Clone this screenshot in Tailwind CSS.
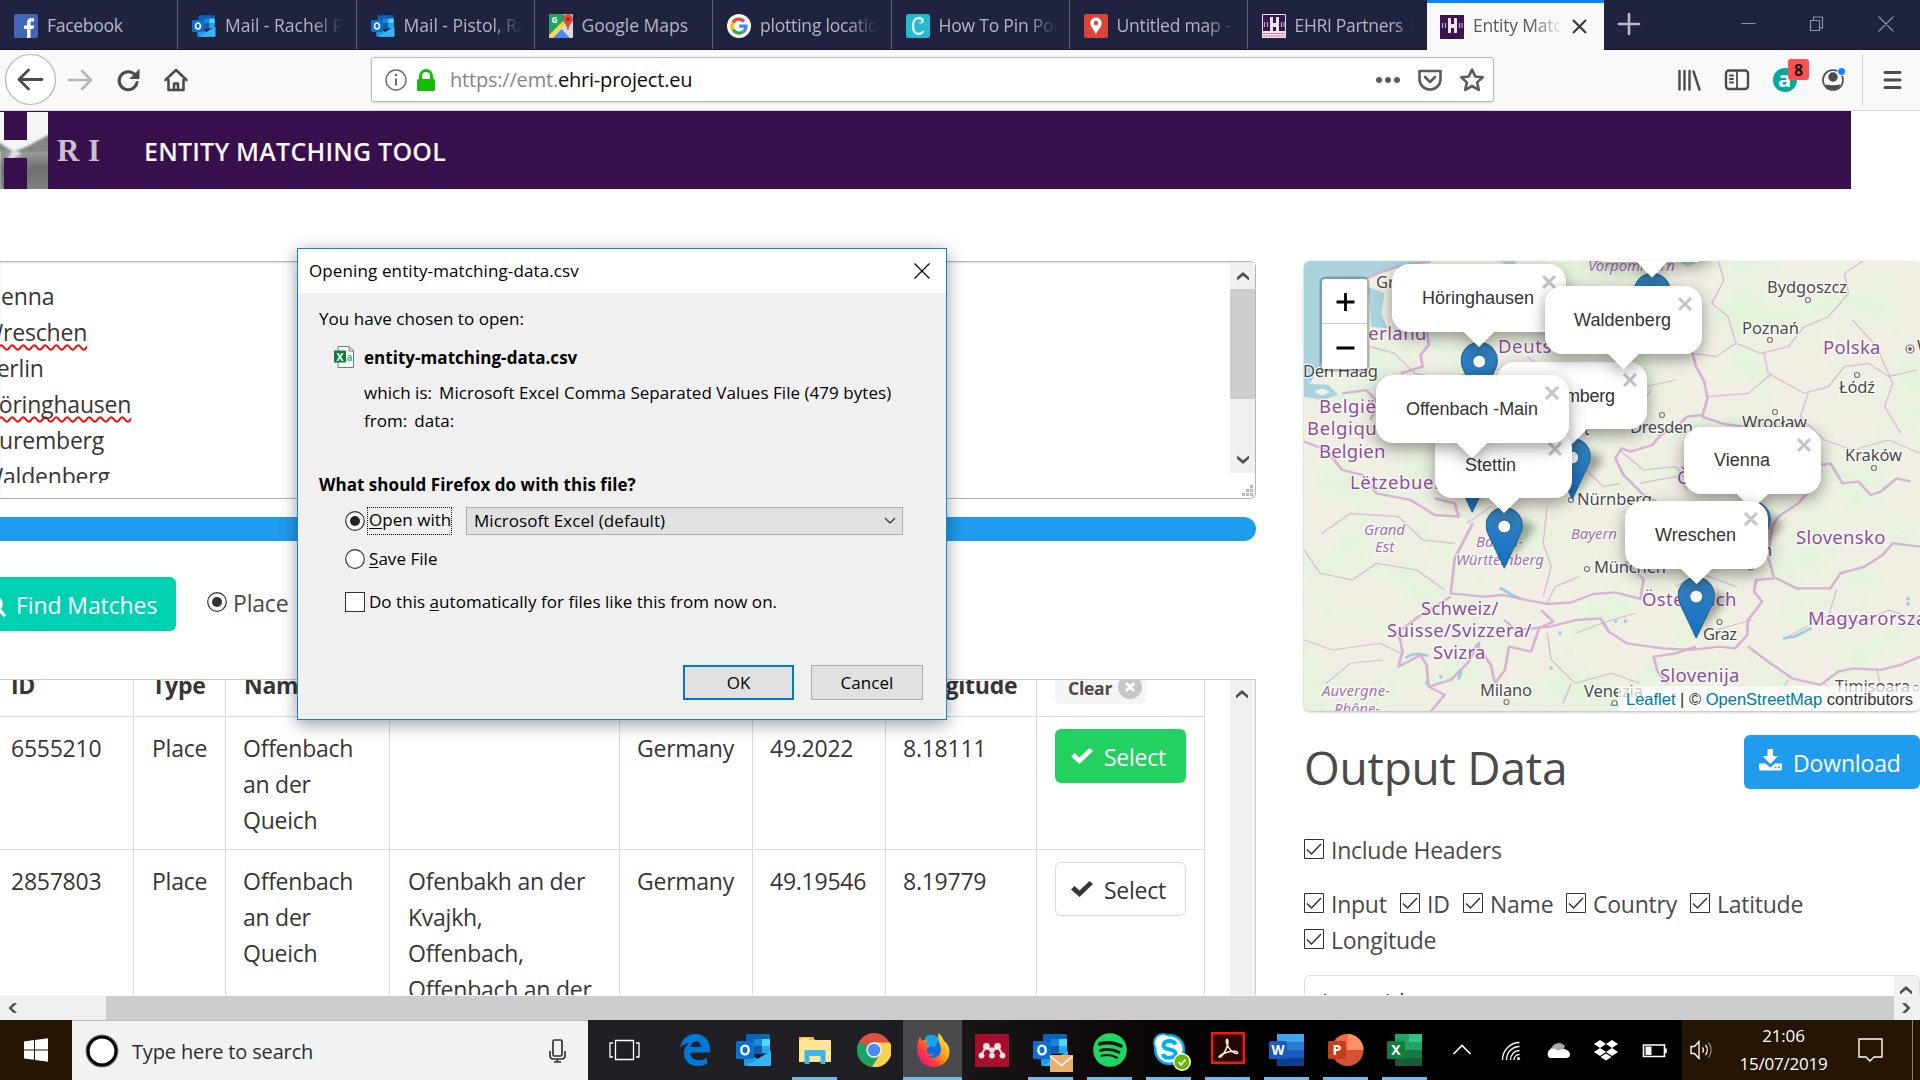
<!DOCTYPE html>
<html lang="en">
<head>
<meta charset="utf-8">
<title>Entity Matching Tool</title>
<script src="https://cdn.jsdelivr.net/npm/@tailwindcss/browser@4"></script>
</head>
<body class="w-[1920px] h-[1080px] overflow-hidden bg-white font-['Open_Sans',sans-serif] text-[#363636]">
<svg class="absolute size-0">
  <defs>
    <symbol id="outlook" viewBox="0 0 36 32">
      <path d="M10 1.500a1.500 1.500 0 0 1 1.500-1.500h21a1.500 1.500 0 0 1 1.500 1.500V20H10z" fill="#0a64b4"/>
      <path d="M18 5h8v7h-8z" fill="#1a86dc"/><path d="M26 5h8v7h-8z" fill="#50d9ff"/><path d="M10 12h16v8H10z" fill="#0d5cab"/><path d="M26 12h8v7h-8z" fill="#28a8ea"/>
      <path d="M35 17v13.500a1.500 1.500 0 0 1-1.500 1.500h-24A1.500 1.500 0 0 1 8 30.500V17l14 8z" fill="#1f9ae4"/><path d="M35 17L10 32h23.500a1.500 1.500 0 0 0 1.500-1.500z" fill="#37b4f2"/>
      <rect y="7" width="18" height="18" rx="1.500" fill="#0b6fce"/>
      <ellipse cx="9" cy="16" rx="3.700" ry="4.400" fill="none" stroke="#fff" stroke-width="2.400"/>
    </symbol>
    <symbol id="pin" viewBox="0 0 25 41">
      <path d="M12.500.5C5.800.5.5 5.900.5 12.500c0 2.500.8 4.900 2.100 7.100L12.500 40.500l9.900-20.900c1.300-2.200 2.100-4.600 2.100-7.100 0-6.600-5.300-12-12-12z" fill="url(#pinfill)" stroke="#2b6a9c" stroke-width=".9"/>
      <circle cx="12.500" cy="13" r="4.400" fill="#fff" stroke="#2a6ea8" stroke-width=".8"/>
    </symbol>
    <linearGradient id="pinfill" x1="0" y1="0" x2="0" y2="1"><stop offset="0" stop-color="#3883bd"/><stop offset="1" stop-color="#126fc6"/></linearGradient>
    <symbol id="up" viewBox="0 0 12 10"><path d="M0 8.500V5.200L6 0l6 5.200v3.300L6 3.700z" fill="#505050"/></symbol>
    <symbol id="ticked" viewBox="0 0 20 20"><path d="M.5.5h19v19H.5z" fill="#fff" stroke="#333"/><path d="M3 10.500l4.500 4.500L17 5" fill="none" stroke="#333" stroke-width="1.500"/></symbol>
    <symbol id="check" viewBox="0 0 22 16"><path d="M0 8.500L3.500 5l5 4.500L18.500 0 22 3 8.500 16z" fill="currentColor"/></symbol>
    <symbol id="ehri" viewBox="0 0 24 24"><path d="M0 0h24v24H0z" fill="#3a1550"/><path d="M8 3h3v6h3V3h3v15h-3v-5h-3v5H8z" fill="#e8e4ec"/><path d="M2.500 8v5M5.500 8v5M19.500 8v5M22 8v5" stroke="#b9a9c4" stroke-width="1.200"/></symbol>
  </defs>
</svg>

<div class="flex flex-col h-[1080px]">
  <!-- tab strip -->
  <div class="flex h-[50px] shrink-0 bg-[#202340] text-[17.500px] text-[#b4b5c0] border-b border-[#15162e]">
    <div class="flex items-center w-[178px] shrink-0 pl-3.5 gap-[9px] border-r border-[#5d5f76] pt-0.5">
      <svg class="size-6 shrink-0" viewBox="0 0 24 24"><rect width="24" height="24" rx="1.500" fill="#4267b2"/><path d="M16.500 24v-9h3l.5-3.500h-3.500V9.200c0-1 .4-1.700 1.800-1.700H20V4.300c-.5-.1-1.400-.2-2.500-.2-2.700 0-4.400 1.600-4.400 4.600v2.800h-3V15h3v9z" fill="#fff"/></svg>
      <span class="whitespace-nowrap tracking-[-0.3px]">Facebook</span>
    </div>
    <div class="flex items-center w-[178.500px] shrink-0 pl-3.5 gap-[9px] border-r border-[#5d5f76] pt-0.5">
      <svg class="size-6 shrink-0"><use href="#outlook"/></svg>
      <span class="whitespace-nowrap overflow-hidden w-[118px] [mask-image:linear-gradient(to_right,black_75%,transparent)]">Mail - Rachel Pistol</span>
    </div>
    <div class="flex items-center w-[178px] shrink-0 pl-3.5 gap-[9px] border-r border-[#5d5f76] pt-0.5">
      <svg class="size-6 shrink-0"><use href="#outlook"/></svg>
      <span class="whitespace-nowrap overflow-hidden w-[118px] [mask-image:linear-gradient(to_right,black_75%,transparent)]">Mail - Pistol, Rachel</span>
    </div>
    <div class="flex items-center w-[178.500px] shrink-0 pl-3.5 gap-[9px] border-r border-[#5d5f76] pt-0.5">
      <svg class="size-6 shrink-0" viewBox="0 0 24 24"><rect width="24" height="24" rx="1.500" fill="#d8dce0"/><path d="M0 1.500A1.500 1.500 0 0 1 1.500 0H15v8L0 23z" fill="#1da462"/><path d="M0 21L14 7l3 3L3 24H0z" fill="#fbd44b"/><path d="M4 24l8.500-9L21 24z" fill="#4a89f3"/><path d="M19 0c-3 0-5 2.200-5 5 0 4 4 5 4.500 11h1C20 10 24 9 24 5c0-2.800-2-5-5-5z" fill="#e04a3c"/><circle cx="19" cy="5" r="1.800" fill="#7c2a22"/><text x="2.500" y="9" font-size="8" font-weight="700" fill="#fff">G</text></svg>
      <span class="whitespace-nowrap">Google Maps</span>
    </div>
    <div class="flex items-center w-[178.500px] shrink-0 pl-3.5 gap-[9px] border-r border-[#5d5f76] pt-0.5">
      <svg class="size-6 shrink-0" viewBox="0 0 24 24"><circle cx="12" cy="12" r="12" fill="#fff"/><g fill="none" stroke-width="3.200"><path d="M17 7.300A7 7 0 0 0 5.900 8.600" stroke="#ea4335"/><path d="M5.900 8.600a7 7 0 0 0 0 6.800" stroke="#fbbc05"/><path d="M5.900 15.400a7 7 0 0 0 10.500 2.100" stroke="#34a853"/><path d="M16.400 17.500A7 7 0 0 0 19 12.200h-6.800" stroke="#4285f4"/></g></svg>
      <span class="whitespace-nowrap overflow-hidden w-[118px] tracking-[-0.2px] [mask-image:linear-gradient(to_right,black_75%,transparent)]">plotting locations</span>
    </div>
    <div class="flex items-center w-[178px] shrink-0 pl-3.5 gap-[9px] border-r border-[#5d5f76] pt-0.5">
      <svg class="size-6 shrink-0" viewBox="0 0 24 24"><rect width="24" height="24" rx="2.500" fill="#27b9cf"/><path d="M17 8.500C17 5 15 4 12.500 4 9 4 7 7.500 7 12s2 8 5.500 8c2.500 0 4-1 5-3" fill="none" stroke="#d9f4f8" stroke-width="2.400"/><path d="M13.500 8.500c2 .5 3.500 0 3.500-2" fill="none" stroke="#d9f4f8" stroke-width="1.600"/></svg>
      <span class="whitespace-nowrap overflow-hidden w-[118px] tracking-[-0.2px] [mask-image:linear-gradient(to_right,black_75%,transparent)]">How To Pin Point</span>
    </div>
    <div class="flex items-center w-[178px] shrink-0 pl-3.5 gap-[9px] border-r border-[#5d5f76] pt-0.5">
      <svg class="size-6 shrink-0" viewBox="0 0 24 24"><rect width="24" height="24" rx="2.500" fill="#db4437"/><path d="M12 3.500c-3.300 0-5.700 2.500-5.700 5.600C6.300 13 10 15.500 12 20.500c2-5 5.700-7.500 5.700-11.400 0-3.100-2.400-5.600-5.700-5.600z" fill="#fff"/><circle cx="12" cy="9" r="2.200" fill="#db4437"/></svg>
      <span class="whitespace-nowrap overflow-hidden w-[118px] tracking-[-0.2px] [mask-image:linear-gradient(to_right,black_75%,transparent)]">Untitled map - Google</span>
    </div>
    <div class="flex items-center w-[179.500px] shrink-0 pl-3.5 gap-[9px] pt-0.5">
      <svg class="size-6 shrink-0" viewBox="0 0 24 24"><use href="#ehri"/><path d="M0 17h24v7H0z" fill="#f2e9f0"/><path d="M1 19.500h22M1 22h22" stroke="#d9607e" stroke-width="1.200" stroke-dasharray="2 .6"/><path d="M.5.5h23v23H.5z" fill="none" stroke="#e8e0ec"/></svg>
      <span class="whitespace-nowrap overflow-hidden w-[118px] tracking-[-0.3px] [mask-image:linear-gradient(to_right,black_85%,transparent)]">EHRI Partners | EHRI</span>
    </div>
    <div class="flex items-center w-[177px] h-[50px] shrink-0 pl-[13px] gap-[9px] bg-[#f9f9fa] border-t-3 border-[#0a84ff] text-[#58585e]">
      <svg class="size-6 shrink-0"><use href="#ehri"/></svg>
      <span class="whitespace-nowrap overflow-hidden w-[90px] -mt-0.5 tracking-[-0.2px] [mask-image:linear-gradient(to_right,black_65%,transparent)]">Entity Matching</span>
      <svg class="size-[15px] ml-0 shrink-0" viewBox="0 0 15 15"><path d="M1 1l13 13M14 1L1 14" stroke="#3a3a3e" stroke-width="2.200"/></svg>
    </div>
    <svg class="w-[316px] h-[49px] shrink-0" viewBox="1604 0 316 49" fill="none" stroke="#b9bac6"><path d="M1629 14v20M1619 24h20" stroke-width="2.600" stroke-linecap="round"/><path d="M1741.500 23.500h14M1810.500 20.500h9v10h-9zM1813.500 20v-3h9v11h-3M1878.500 16.500l15 15M1893.500 16.500l-15 15" stroke-width="1.200" stroke="#8f919f"/></svg>
  </div>

  <!-- navigation toolbar -->
  <div class="flex h-[61px] shrink-0 bg-[#f9f9fa] border-b border-[#d9d9db] items-start">
    <svg class="w-[371px] h-[60px] shrink-0" viewBox="0 50 371 60" fill="none" stroke="#4a4a4f" stroke-width="2.800" stroke-linecap="round" stroke-linejoin="round">
      <circle cx="30.500" cy="79.500" r="25" fill="#fff" stroke="#b5b5b8" stroke-width="1.200"/>
      <path d="M42 79.500H19.500M28.500 70l-9.500 9.500 9.500 9.500"/>
      <path d="M69 80h21M82 71l9 9-9 9" stroke="#b6b6b9" stroke-width="2.600"/>
      <path d="M135.500 75.500A9 9 0 1 0 137 82.500" stroke-width="3"/><path d="M130.500 78.500h8.500V70z" fill="#4a4a4f" stroke-width="1"/>
      <path d="M165.500 80L176 70l10.500 10M168.500 80v10h15V80M174 90v-6.500h4V90" stroke-width="2.600"/>
    </svg>
    <div class="flex items-center w-[1123px] h-[45px] mt-[7px] shrink-0 border border-[#b9b9bb] rounded-[3px] bg-white shadow-sm">
      <svg class="w-[70px] h-[43px] shrink-0 ml-2" viewBox="380 58 70 43" fill="none"><circle cx="396" cy="80" r="10" stroke="#6b6b6e" stroke-width="1.400"/><path d="M396 78.500v7" stroke="#6b6b6e" stroke-width="2"/><circle cx="396" cy="75" r="1.300" fill="#6b6b6e"/><rect x="417" y="79" width="18" height="12" rx="1.500" fill="#12bc00"/><path d="M420.500 80v-4a5.500 5.500 0 0 1 11 0v4" stroke="#12bc00" stroke-width="3"/></svg>
      <span class="text-[20px] text-[#85858a] whitespace-nowrap tracking-[-0.2px] pt-px">https://emt.<span class="text-[#0c0c0d]">ehri-project.eu</span></span>
      <svg class="w-[124px] h-[43px] ml-auto shrink-0" viewBox="1369 58 124 43" fill="none" stroke="#5c5c60" stroke-width="2.600" stroke-linejoin="round"><g fill="#5c5c60" stroke="none"><circle cx="1379" cy="80" r="3"/><circle cx="1388" cy="80" r="3"/><circle cx="1397" cy="80" r="3"/></g><path d="M1419.500 71h21v8c0 6-4.700 10.500-10.500 10.500s-10.500-4.500-10.500-10.500z"/><path d="M1425 77l5 5 5-5" stroke-linecap="round"/><path d="M1472 69.500l3.200 7 7.600.8-5.700 5.100 1.700 7.500-6.800-3.900-6.800 3.900 1.700-7.500-5.700-5.100 7.600-.8z"/></svg>
    </div>
    <svg class="w-[426px] h-[60px] shrink-0" viewBox="1494 50 426 60" fill="none" stroke="#4a4a4f" stroke-width="2.400" stroke-linecap="round">
      <path d="M1679.500 71v18.500M1684.500 71v18.500M1689.500 71v18.500M1693.500 71.500l6 18"/>
      <rect x="1726" y="70.500" width="22" height="18.500" rx="3"/><path d="M1737 71v18M1730 75.500h3M1730 79h3M1730 82.500h3" stroke-width="1.800"/>
      <circle cx="1785" cy="80" r="12" fill="#00a99d" stroke="none"/><text x="1778" y="87" font-size="22" font-weight="700" fill="#fff" stroke="none">a</text>
      <rect x="1788" y="59" width="21" height="21" rx="3" fill="#ff4f4f" stroke="none"/><text x="1794" y="76" font-size="16" font-weight="700" fill="#1c0808" stroke="none">8</text>
      <circle cx="1833" cy="80" r="10" stroke-width="1.600"/><circle cx="1833" cy="77" r="4.700" fill="#4a4a4f" stroke="none"/><path d="M1825.500 84.500c4 1 11 1 15 0-1 3.500-4.500 5-7.500 5s-6.500-1.500-7.500-5z" fill="#4a4a4f" stroke="none"/><circle cx="1841.500" cy="71.500" r="4" fill="#0a84ff" stroke="#f9f9fa" stroke-width="1"/>
      <path d="M1862.500 54v51" stroke="#d5d5d7" stroke-width="1"/><path d="M1885 72.500h15M1885 80h15M1885 87.500h15" stroke-width="3"/>
    </svg>
  </div>

  <!-- page -->
  <main class="h-[884px] shrink-0 overflow-hidden">
    <header class="flex items-center h-[78px] w-[1851px] bg-[#360f4c] shadow-[0_3px_0_#fafafa]">
      <svg class="w-[144px] h-[78px] shrink-0" viewBox="0 111 144 78">
        <defs>
          <clipPath id="letter"><path d="M0 112h4v28h23v-28h21v77H27v-31H4v31H0z"/></clipPath>
          <linearGradient id="field" x1="0" y1="0" x2="0" y2="1"><stop offset="0" stop-color="#a2a2a2"/><stop offset=".4" stop-color="#6f6f6f"/><stop offset="1" stop-color="#858585"/></linearGradient>
          <filter id="haze"><feGaussianBlur stdDeviation="1.200"/></filter>
        </defs>
        <g clip-path="url(#letter)">
          <path d="M0 111h48v78H0z" fill="#f6f6f6"/>
          <g filter="url(#haze)"><path d="M0 150h50v45H0z" fill="url(#field)"/><path d="M50 134L28 146 14 152h36zM-2 142l14 9H-2z" fill="#858585"/><path d="M13 149l9 5-16 8z" fill="#e0e0e0"/></g>
        </g>
        <g font-family="Liberation Serif" font-size="31" font-weight="700" fill="#c9c0d2"><text x="57" y="161">R</text><text x="88" y="161">I</text></g>
      </svg>
      <h1 class="text-[25px] font-semibold text-[#f5f5f5] whitespace-nowrap tracking-[0.2px] pt-1">ENTITY MATCHING TOOL</h1>
    </header>
    <div class="flex pt-[72px]">
      <section class="w-[1256px] shrink-0">
        <div class="flex h-[238px] border-y border-r border-[#b5b5b5] rounded-r-md shadow-[inset_0_1px_2px_rgba(10,10,10,.12)]">
          <div class="grow h-[221px] overflow-hidden pt-4">
            <div class="-ml-[18px] text-[23px] leading-9 tracking-[-0.2px]">
              <p>Vienna</p>
              <p class="underline decoration-wavy decoration-[#f00] decoration-[1.500px] underline-offset-[3px]">Wreschen</p>
              <p>Berlin</p>
              <p class="underline decoration-wavy decoration-[#f00] decoration-[1.500px] underline-offset-[3px] [text-decoration-skip-ink:none]">Höringhausen</p>
              <p>Nuremberg</p>
              <p>Waldenberg</p>
            </div>
          </div>
          <div class="flex flex-col w-[25px] mt-px">
            <div class="flex flex-col items-center h-[210px] bg-[#f0f0f0]">
              <svg class="w-3 h-2.5 mt-[9px] mb-[7px]"><use href="#up"/></svg>
              <div class="w-full h-[110px] bg-[#cdcdcd]"></div>
              <svg class="w-3 h-2.5 mt-auto mb-[9px] rotate-180"><use href="#up"/></svg>
            </div>
            <svg class="w-3 h-3 mt-3 ml-[11px]" viewBox="0 0 12 12" fill="#b9b9b9"><path d="M9 0h3v3H9zM9 4h3v3H9zM5 4h3v3H5zM9 8h3v3H9zM5 8h3v3H5zM1 8h3v3H1z"/></svg>
          </div>
        </div>
        <div class="h-6 mt-[18px] rounded-r-full bg-[#209cee]"></div>
        <div class="flex mt-9 h-[54px] items-center text-[23px] text-[#4a4a4a]">
          <div class="flex items-center h-[54px] w-[176px] rounded-r-md bg-[#00d1b2] text-white">
            <svg class="w-4 h-[54px]" viewBox="0 577 16 54" fill="none" stroke="#fff" stroke-width="3.500"><circle cx="-6" cy="604" r="7"/><path d="M-1 609l5 6" stroke-linecap="round"/></svg>
            <span class="whitespace-nowrap tracking-[-0.1px] pt-0.5">Find Matches</span>
          </div>
          <svg class="size-5 ml-[31px] -mt-1" viewBox="0 0 20 20"><circle cx="10" cy="10" r="9.300" fill="#fff" stroke="#333" stroke-width="1.200"/><circle cx="10" cy="10" r="5" fill="#333"/></svg>
          <span class="ml-1.5 -mt-0.5 tracking-[-0.2px]">Place</span>
        </div>
        <div class="flex mt-12 h-[317px] border-t border-r border-[#c8c8c8] overflow-hidden text-[23px] leading-9 tracking-[-0.25px]">
          <div class="w-[1205px] shrink-0">
            <div class="flex h-[37px] border-b border-[#dbdbdb] font-bold items-stretch [&>div]:border-r [&>div]:border-[#dbdbdb] [&>div>p]:-mt-[13px]">
              <div class="w-[134px] pl-[11px]"><p>ID</p></div>
              <div class="w-[92px] pl-[18px]"><p>Type</p></div>
              <div class="w-[164px] pl-[18px]"><p>Name</p></div>
              <div class="w-[230px] pl-[18px]"></div>
              <div class="w-[133px] pl-[18px]"></div>
              <div class="w-[133px] pl-[18px]"></div>
              <div class="w-[151px] pl-[18px]"><p>Longitude</p></div>
              <div class="w-[168px] pl-[18px]"><div class="flex items-center gap-1.5 w-[91px] h-9 -mt-3 pt-1 pl-[13px] rounded-md bg-[#f5f5f5] text-[17.500px] text-[#4a4a4a] leading-6">Clear<svg class="size-6 shrink-0 -mt-0.5" viewBox="0 0 24 24"><circle cx="12" cy="12" r="12" fill="#c6c6c6"/><path d="M8 8l8 8M16 8l-8 8" stroke="#fff" stroke-width="3"/></svg></div></div>
            </div>
            <div class="flex h-[133px] border-b border-[#dbdbdb] [&>div]:border-r [&>div]:border-[#dbdbdb] [&>div]:pt-[13px]">
              <div class="w-[134px] pl-[11px]">6555210</div>
              <div class="w-[92px] pl-[18px]">Place</div>
              <div class="w-[164px] pl-[17px]">Offenbach<br>an der<br>Queich</div>
              <div class="w-[230px] pl-[18px]"></div>
              <div class="w-[133px] pl-[17px]">Germany</div>
              <div class="w-[133px] pl-[17px]">49.2022</div>
              <div class="w-[151px] pl-[17px]">8.18111</div>
              <div class="w-[168px] pl-[18px]"><div class="flex items-center w-[131px] h-[54px] -mt-px pl-4 gap-[11px] rounded-md bg-[#23d160] text-white"><svg class="w-[22px] h-4 shrink-0"><use href="#check"/></svg><span class="pt-0.5">Select</span></div></div>
            </div>
            <div class="flex h-[190px] [&>div]:border-r [&>div]:border-[#dbdbdb] [&>div]:pt-[13px]">
              <div class="w-[134px] pl-[11px]">2857803</div>
              <div class="w-[92px] pl-[18px]">Place</div>
              <div class="w-[164px] pl-[17px]">Offenbach<br>an der<br>Queich</div>
              <div class="w-[230px] pl-[18px]">Ofenbakh an der<br>Kvajkh,<br>Offenbach,<br>Offenbach an der</div>
              <div class="w-[133px] pl-[17px]">Germany</div>
              <div class="w-[133px] pl-[17px]">49.19546</div>
              <div class="w-[151px] pl-[17px]">8.19779</div>
              <div class="w-[168px] pl-[18px]"><div class="flex items-center w-[131px] h-[54px] -mt-px pl-[15px] gap-[11px] rounded-md border border-[#dbdbdb]"><svg class="w-[22px] h-4 shrink-0"><use href="#check"/></svg><span class="pt-0.5">Select</span></div></div>
            </div>
          </div>
          <div class="w-[25px] ml-auto bg-[#f0f0f0] pt-2.5 pl-[6px]"><svg class="w-3 h-2.5"><use href="#up"/></svg></div>
        </div>
      </section>

      <section class="w-[616px] ml-12 shrink-0">
        <div class="relative h-[450px] rounded-md overflow-hidden bg-[#eff0e2] shadow-[0_1px_3px_rgba(0,0,0,.3)]">
          <svg class="block w-[616px] h-[450px]" viewBox="1304 261 616 450">
            <defs>
              <filter id="woods" x="0" y="0" width="1" height="1"><feTurbulence type="fractalNoise" baseFrequency=".018 .024" numOctaves="4" seed="8"/><feColorMatrix values="0 0 0 0 .78  0 0 0 0 .9  0 0 0 0 .72  3.500 0 0 0 -1.450"/></filter>
              <filter id="soft"><feGaussianBlur stdDeviation="4"/></filter>
              <filter id="drop" x="-.3" y="-.3" width="1.600" height="1.800"><feDropShadow dx="0" dy="5" stdDeviation="8" flood-color="#000" flood-opacity=".4"/></filter>
            </defs>
            <path d="M1304 261h616v450h-616z" fill="#f1efe4"/>
            <path d="M1304 261h616v450h-616z" filter="url(#woods)"/>
            <g transform="translate(1290 250) scale(.4018 .3333)">
              <path d="M30 30h320l-90 25-60 20-30 30-35 90-30 80-30 70-20 45-25 40z" fill="#aad3df"/>
              <path d="M195 110l40 20-8 60 15 45-40-5zM35 400l60 5 25 30-40 15-45-10zM480 30l45 5 30 25 8-30zM960 30l30 20 30-20z" fill="#aad3df"/>
              <path d="M60 425l20-10 20 10-20 12z" fill="#f1efe4"/>
              <g fill="none" stroke="#8ec5e8" stroke-width="8" stroke-linecap="round" opacity=".85"><path d="M290 1222q20-18 50-5M525 1015l25 18 22 12M1230 1165l25-5 40-24M340 1298v2M375 1280v3M425 1265l-5 20M470 1180v5M672 1148v4M650 1252v3M810 1112v3M835 1112v3M800 1365l10-5 10 10M1538 1045v3M1538 1060v3"/></g>
              <g fill="none" stroke="#d3a9d2" stroke-linejoin="round">
                <g stroke-width="7" opacity=".85">
                  <path d="M190 85q70-40 160-50M340 240l5 45-20 30 5 35-55 20M975 130l-8 50 20 20 18 35-6 65 12 50 20 45 8 50-12 50-40 5-20 25-45 30-20 30-55 20-22-10-15 30 20 50 50 60 45 28M1025 500l55 22 50 8 100 60 50 10 45 45 20-5 30 60 40-5 30 40 25-10 40-40 35 10M1310 700l-45 60-50 40-15 30-10 90 15 65-45 5-5 35 20 30-35 55-2 45-30 40-40-5-70 10-70-5-90-15-45-35-20-40-60 5-65 20-85 10-30-30M1210 985l50 30h85l25-45 60-20 45-35 25-35 68 10"/>
                  <path d="M1140 1190l50 45 60 50 70 20 45-40 35-10 70 5 50-15 48-25M1010 1190l-50 20-55 10 10 45 25 35"/>
                  <path d="M35 575l55 25 40 60 50 15 35 55 85 20 60 45 60 5-10-40-50-15M455 820l-45 105-10 105 80 10 50-5 45 12 65 15 60-5 55-25 55-5 62 20 8-60-45-45 50-60-30-50M400 1040l-80 60-50 45 10 60-10 45 55-35 15 30 5 65 55-20 45-55 20-50 35 60 10 55 25-40 10-70 55 15 20-70 35-20-30-35M345 1310l40 25-35 50M130 430l60-10 30 40-20 50"/>
                </g>
                <g stroke-width="3.500" opacity=".75">
                  <path d="M1065 30l15 60-30 70 40 40 20 80 60 30 70-20 40-60 60-30 50-70-10-60 50-40M1110 280l-50 40-55-10M1180 310l10 60 90 60 60-20 40-60 60-10 50 40 70-20M1290 430l-20 70 60 70 70 30 90-30 78 40M1400 210l60 80 40 110-20 70 40 80M1200 370l-60 60-100 10M820 600l60 60 80-10 40 60 60 20M870 700l90-20 30 40M640 770l-10 110 20 70-20 90M500 770l-60 50M720 640l60 70 40-10M80 850l70-60 120 10 60 70 80 10M35 900l40 70 80 20 60-50 100 20 70 60M35 1170l70 30 120-20 50 30M90 1300l60-60 80-10M640 1150l10 80 60 70 90-30 70 30M700 1300l-20 60M860 1090l-60 20-90 40M960 1010l60-40 90 40M1150 1110l-90 30M1240 1160l90-60 90 20 70-40 78 30M1240 1290l-30 60M1330 1300l60 80M1460 1255l20 110M1360 1020l-20 80M930 770l60 40 80 20M640 1060l20-50 60-30M200 290l60 20 50 60 90 20 70-40 60 10M300 380l40 70-80 60M590 320l70 60 100-20M760 360l90 60 110-30M900 420l-60 90-90 10"/>
                </g>
              </g>
            </g>
            <g class="font-['Noto_Sans',sans-serif]" stroke="#fff" stroke-opacity=".7" stroke-width="2.500" paint-order="stroke">
              <g font-size="16.500" fill="#4a4a4a">
                <text x="1376" y="288">Groningen</text><text x="1303" y="377" textLength="75">Den Haag</text><text x="1577" y="505" textLength="75">Nürnberg</text><text x="1594" y="573" textLength="72">München</text><text x="1703" y="640" textLength="34">Graz</text><text x="1480" y="696" textLength="52">Milano</text><text x="1584" y="697" textLength="59">Venezia</text><text x="1835" y="692" textLength="75">Timișoara</text><text x="1845" y="461" textLength="57">Kraków</text><text x="1839" y="393" textLength="36">Łódź</text><text x="1742" y="428" textLength="65">Wrocław</text><text x="1630" y="433" textLength="63">Dresden</text><text x="1545" y="435">Erfurt</text><text x="1742" y="334" textLength="57">Poznań</text><text x="1767" y="293" textLength="80">Bydgoszcz</text><text x="1917" y="352">W</text><text x="1733" y="556">Wien</text>
              </g>
              <g font-size="18.500" fill="#8d4f97" letter-spacing=".6">
                <text x="1331" y="340" textLength="96">Nederland</text><text x="1319" y="413">België</text><text x="1307" y="435">Belgique</text><text x="1319" y="458" textLength="67">Belgien</text><text x="1350" y="489">Lëtzebuerg</text><text x="1642" y="606" textLength="95">Österreich</text><text x="1421" y="615" textLength="78">Schweiz/</text><text x="1387" y="637" textLength="145">Suisse/Svizzera/</text><text x="1433" y="659" textLength="53">Svizra</text><text x="1660" y="682" textLength="80">Slovenija</text><text x="1808" y="625">Magyarország</text><text x="1796" y="544" textLength="90">Slovensko</text><text x="1498" y="353">Deutschland</text><text x="1823" y="354" textLength="58">Polska</text><text x="1677" y="484">Česko</text>
              </g>
              <g font-size="15" font-style="italic" fill="#a573ae">
                <text x="1364" y="535" textLength="41">Grand</text><text x="1375" y="552">Est</text><text x="1476" y="547" textLength="47">Baden-</text><text x="1456" y="565" textLength="88">Württemberg</text><text x="1571" y="539" textLength="46">Bayern</text><text x="1322" y="696" textLength="68">Auvergne-</text><text x="1334" y="714" textLength="46">Rhône-</text><text x="1588" y="271" textLength="87">Vorpommern</text>
              </g>
            </g>
            <g fill="#f4f2ea" stroke="#777" stroke-width="1.200"><circle cx="1571" cy="500" r="2.500"/><circle cx="1587" cy="569" r="2.500"/><circle cx="1719.500" cy="622" r="2.500"/><circle cx="1506.500" cy="702" r="2.500"/><circle cx="1614.500" cy="703" r="2.500"/><circle cx="1916" cy="688" r="2.500"/><circle cx="1874" cy="468" r="2.500"/><circle cx="1857" cy="375" r="2.500"/><circle cx="1775" cy="412" r="2.500"/><circle cx="1662" cy="415" r="2.500"/><circle cx="1770" cy="340" r="2.500"/><circle cx="1808" cy="300" r="2.500"/><circle cx="1751" cy="567" r="3"/><circle cx="1910" cy="349" r="4"/><circle cx="1910" cy="349" r="1.300" fill="#444"/></g>
            <g filter="url(#soft)" fill="#000" opacity=".35"><path d="M1504 565l32-38-18-10zM1696 636l32-38-18-10zM1572 497l32-38-18-10zM1472 510l32-38-18-10zM1752 561l32-38-18-10z"/></g>
            <g><use href="#pin" x="1633.500" y="273" width="37.500" height="61.500"/><use href="#pin" x="1460.500" y="342" width="37.500" height="61.500"/><use href="#pin" x="1553.500" y="438" width="37.500" height="61.500"/><use href="#pin" x="1453.500" y="451" width="37.500" height="61.500"/><use href="#pin" x="1733.500" y="501" width="37.500" height="61.500"/><use href="#pin" x="1485.500" y="507" width="37.500" height="61.500"/><use href="#pin" x="1677.500" y="577" width="37.500" height="61.500"/></g>
            <g class="font-['Liberation_Sans',sans-serif]" font-size="18" fill="#333">
              <g filter="url(#drop)"><path d="M1608 194h86a18 18 0 0 1 18 18v32a18 18 0 0 1-18 18h-27l-15 15.500-15-15.500h-29a18 18 0 0 1-18-18v-32a18 18 0 0 1 18-18z" fill="#fff"/></g>
              <g filter="url(#drop)"><path d="M1410 264h138a18 18 0 0 1 18 18v32a18 18 0 0 1-18 18h-54l-15 15-15-15h-54a18 18 0 0 1-18-18v-32a18 18 0 0 1 18-18z" fill="#fff"/></g>
              <text x="1422" y="304" textLength="112">Höringhausen</text><path d="M1543 276l12 12M1555 276l-12 12" stroke="#c3c3c3" stroke-width="3"/>
              <g filter="url(#drop)"><path d="M1702 427h101a18 18 0 0 1 18 18v31a18 18 0 0 1-18 18h-35l-15.500 15-15.500-15h-35a18 18 0 0 1-18-18v-31a18 18 0 0 1 18-18z" fill="#fff"/></g>
              <text x="1714" y="466" textLength="56">Vienna</text><path d="M1798 439l12 12M1810 439l-12 12" stroke="#c3c3c3" stroke-width="3"/>
              <g filter="url(#drop)"><path d="M1643 501h107a18 18 0 0 1 18 18v32a18 18 0 0 1-18 18h-38.500l-15 15-15-15H1643a18 18 0 0 1-18-18v-32a18 18 0 0 1 18-18z" fill="#fff"/></g>
              <text x="1655" y="541" textLength="81">Wreschen</text><path d="M1745 513l12 12M1757 513l-12 12" stroke="#c3c3c3" stroke-width="3"/>
              <g filter="url(#drop)"><path d="M1515 362h114a18 18 0 0 1 18 18v31a18 18 0 0 1-18 18h-42l-15 15-15-15h-42a18 18 0 0 1-18-18v-31a18 18 0 0 1 18-18z" fill="#fff"/></g>
              <text x="1527" y="402" textLength="88">Nuremberg</text><path d="M1624 374l12 12M1636 374l-12 12" stroke="#c3c3c3" stroke-width="3"/>
              <g filter="url(#drop)"><path d="M1453 430h101a18 18 0 0 1 18 18v32a18 18 0 0 1-18 18h-35l-15 15-15-15h-36a18 18 0 0 1-18-18v-32a18 18 0 0 1 18-18z" fill="#fff"/></g>
              <text x="1465" y="471" textLength="51">Stettin</text><path d="M1549 443l12 12M1561 443l-12 12" stroke="#c3c3c3" stroke-width="3"/>
              <g filter="url(#drop)"><path d="M1394 375h157a18 18 0 0 1 18 18v32a18 18 0 0 1-18 18h-64l-15 15-15-15h-63a18 18 0 0 1-18-18v-32a18 18 0 0 1 18-18z" fill="#fff"/></g>
              <text x="1406" y="415" textLength="132">Offenbach -Main</text><path d="M1546 387l12 12M1558 387l-12 12" stroke="#c3c3c3" stroke-width="3"/>
              <g filter="url(#drop)"><path d="M1563 286h121a18 18 0 0 1 18 18v32a18 18 0 0 1-18 18h-45.500l-15 15-15-15H1563a18 18 0 0 1-18-18v-32a18 18 0 0 1 18-18z" fill="#fff"/></g>
              <text x="1574" y="326" textLength="97">Waldenberg</text><path d="M1679 298l12 12M1691 298l-12 12" stroke="#c3c3c3" stroke-width="3"/>
            </g>
            <rect x="1319.500" y="276.500" width="50" height="95" rx="6" fill="#000" fill-opacity=".25"/>
            <rect x="1322" y="279" width="45" height="90" rx="3" fill="#fff"/>
            <path d="M1322 323.500h45" stroke="#ccc"/><path d="M1336.500 302h18M1345.500 293v18M1336.500 348h18" stroke="#000" stroke-width="2.800"/>
          </svg>
          <div class="absolute bottom-0 right-0 h-[25px] pl-2 pr-[7px] bg-white/70 font-['Liberation_Sans',sans-serif] text-[16.500px] leading-[27px] text-[#333] whitespace-nowrap"><span class="text-[#0078a8]">Leaflet</span> | © <span class="text-[#0078a8]">OpenStreetMap</span> contributors</div>
        </div>
        <div class="flex justify-between mt-6 h-16">
          <h2 class="text-[46px] leading-16 text-[#4a4a4a] whitespace-nowrap tracking-[-0.25px]">Output Data</h2>
          <div class="flex items-center w-[176px] h-[54px] pl-[15px] gap-[11px] rounded-md bg-[#209cee] text-white text-[23px]">
            <svg class="w-[23px] h-[22px] shrink-0 -mt-1" viewBox="0 0 23 22"><path d="M8.500 0h5.500v7h5l-7.700 8L3.500 7h5z" fill="#fff"/><path d="M0 14.500h6.500l4.800 4 4.800-4H23V20a1.500 1.500 0 0 1-1.500 1.500h-20A1.500 1.500 0 0 1 0 20z" fill="#fff"/><path d="M15.500 18.500h2M19 18.500h2" stroke="#209cee" stroke-width="1.300"/></svg>
            <span class="tracking-[-0.15px] pt-0.5">Download</span>
          </div>
        </div>
        <div class="mt-[33px] text-[23px] leading-9 text-[#4a4a4a] tracking-[-0.25px] [&_label]:flex [&_label]:items-center [&_label]:gap-[7px] [&_label]:whitespace-nowrap [&_svg]:size-5 [&_svg]:shrink-0 [&_svg]:-mt-0.5">
          <label><svg><use href="#ticked"/></svg>Include Headers</label>
          <div class="flex mt-[18px]">
            <label class="w-24"><svg><use href="#ticked"/></svg>Input</label>
            <label class="w-[63px]"><svg><use href="#ticked"/></svg>ID</label>
            <label class="w-[103px]"><svg><use href="#ticked"/></svg>Name</label>
            <label class="w-[124px]"><svg><use href="#ticked"/></svg>Country</label>
            <label><svg><use href="#ticked"/></svg>Latitude</label>
          </div>
          <label><svg><use href="#ticked"/></svg>Longitude</label>
        </div>
        <div class="flex mt-[17px] h-[40px] border border-[#dbdbdb] rounded-md overflow-hidden">
          <div class="grow pl-[17px] pt-2 text-[23px] leading-9">Input,id</div>
          <div class="w-[25px] bg-[#f0f0f0] pt-2.5 pl-[6px]"><svg class="w-3 h-2.5"><use href="#up"/></svg></div>
        </div>
      </section>
    </div>
  </main>

  <!-- horizontal scrollbar -->
  <div class="flex h-[25px] shrink-0 bg-[#f0f0f0] border-t border-[#f8f8f8]">
    <svg class="w-[106px] h-6" viewBox="0 0 106 24"><path d="M17 7h-3.500L8.500 12l5 5H17l-5-5z" fill="#505050"/></svg>
    <div class="w-[1788px] bg-[#cdcdcd]"></div>
    <svg class="w-[26px] h-6" viewBox="0 0 26 24"><path d="M8 7h3.500l5 5-5 5H8l5-5z" fill="#505050"/></svg>
  </div>

  <!-- taskbar -->
  <div class="flex h-[60px] shrink-0 bg-linear-to-r from-[#201f24] from-45% via-[#0a0606] via-60% to-black to-75% text-white">
    <div class="flex w-[72px] items-center justify-center bg-[#251502]"><svg class="size-6" viewBox="0 0 24 24" fill="#fff"><path d="M0 3.500l10-1.400v9.400H0zM11 2l13-1.800v11.300H11zM0 12.500h10v9.300L0 20.400zM11 12.500h13v11.300L11 22z"/></svg></div>
    <div class="flex w-[516px] items-center bg-[#f2f2f2] text-[#2d2d2d] border-t border-[#bbb]">
      <svg class="size-[34px] ml-[13px]" viewBox="0 0 34 34"><circle cx="17" cy="17" r="14.500" fill="#fff" stroke="#888" stroke-width="4"/><circle cx="17" cy="17" r="14" fill="none" stroke="#000" stroke-width="3"/></svg>
      <span class="ml-[13px] text-[20px] whitespace-nowrap tracking-[-0.15px] pt-0.5">Type here to search</span>
      <svg class="w-[17px] h-6 ml-auto mr-[22px]" viewBox="0 0 17 24" fill="none" stroke="#333" stroke-width="1.700"><rect x="4" y="1" width="9" height="16" rx="1.500"/><path d="M1 12v4.500c0 2.500 1 3.500 3.500 3.500h8c2.500 0 3.500-1 3.500-3.500V12M8.500 20v3M5 23h7"/></svg>
    </div>
    <div class="flex w-[79px] items-center pl-[21px]"><svg class="w-[31px] h-6" viewBox="0 0 31 24" fill="none" stroke="#fff" stroke-width="1.300"><path d="M6.500 2.500h18v19h-18zM4 5H1v14h3M27 5h3v14h-3"/></svg></div>
    <div class="flex [&>div]:w-[59px] [&>div]:flex [&>div]:items-center [&>div]:justify-center [&>div]:relative [&_i]:absolute [&_i]:bottom-0 [&_i]:h-[3px] [&_i]:w-[45px] [&_i]:bg-[#76b9ed]">
      <div><svg class="w-[30px] h-8 -translate-x-0.5" viewBox="0 0 30 32"><path d="M.2 14C1.500 5 7.500 0 15.500 0 25 0 30 7 30 15v3.500H10c.3 5 4 7.500 9 7.500 3 0 5.500-.8 8-2.300V30c-2.500 1.300-6 2-9.500 2C9.500 32 4 27 4 19.500c0-5 2.500-8.500 6-10.500C5.500 9.500 2 11 .2 14zM10.500 13H21c0-3.500-1.800-5.500-5-5.500s-5 2.300-5.500 5.500z" fill="#0078d7"/></svg></div>
      <div><svg class="w-9 h-8 -translate-x-0.5"><use href="#outlook"/></svg></div>
      <div><svg class="w-8 h-8" viewBox="0 0 32 32"><path d="M0 4a1 1 0 0 1 1-1h13l2 3h15a1 1 0 0 1 1 1v21H0z" fill="#ffe594"/><path d="M0 6V4a1 1 0 0 1 1-1h13l1.500 3z" fill="#f5bf35"/><path d="M2.500 5h7" stroke="#fff"/><path d="M5.500 30V17.500a1.500 1.500 0 0 1 1.500-1.500h18a1.500 1.500 0 0 1 1.500 1.500V30h-5v-8h-11v8z" fill="#3db5e6"/></svg><i></i></div>
      <div><svg class="w-[34px] h-[34px]" viewBox="0 0 34 34"><circle cx="17" cy="17" r="17" fill="#dd5144"/><path d="M2.300 8.500A17 17 0 0 0 15 33.900L23.500 20 17 17z" fill="#1ca261"/><path d="M33 9.500A17 17 0 0 1 15 33.900l8.500-13.500L17 9.500z" fill="#ffd24d"/><circle cx="17" cy="17" r="7.700" fill="#fff"/><circle cx="17" cy="17" r="6.300" fill="#4c8bf5"/></svg></div>
      <div class="bg-[#4a4a4c]"><svg class="w-[34px] h-[34px]" viewBox="0 0 34 34"><defs><linearGradient id="fox" x1="1" y1=".1" x2=".1" y2=".9"><stop offset="0" stop-color="#fff44f"/><stop offset=".45" stop-color="#ff980e"/><stop offset=".75" stop-color="#ff3647"/><stop offset="1" stop-color="#e31587"/></linearGradient></defs><circle cx="16" cy="17" r="13.500" fill="#0a6ee0"/><path d="M9 4c6-4 13-1 14 2l-4 8-9-2z" fill="#12a5ee"/><path d="M1 15C1 10 3 7 3.500 4c1.500 1 2 2.500 2.300 4C8 6.500 10 6.500 12 7c-2 1.500-2.500 3-2 4.500l4 1c0 2-3.500 2.500-3.500 4.500 0 3 4 5.500 8 3.500-1.500 2-4 3.500-6.500 3 5 3.500 13 .5 13-7C25 11 21 8 22.500 0c3 2.500 4.500 5.500 5.500 8 3 2 5.500 6 5.500 10.500C33.500 27.500 26.500 34 17.500 34 8 34 1 27 1 15z" fill="url(#fox)"/></svg><i class="w-full!"></i></div>
      <div><svg class="w-[34px] h-[33px]" viewBox="0 0 34 33"><path d="M0 0h34v33H0z" fill="#a50f2b"/><path d="M6 21l5-8 6 4 6-4 5 8" fill="none" stroke="#f0dfe2" stroke-width="2"/><g fill="#f0dfe2"><circle cx="11.500" cy="12.500" r="3.400"/><circle cx="22.500" cy="12.500" r="3.400"/><circle cx="6.500" cy="21.500" r="2.900"/><circle cx="17" cy="21.500" r="2.900"/><circle cx="27.500" cy="21.500" r="2.900"/><circle cx="17" cy="16" r="2.800"/></g></svg></div>
      <div><svg class="w-10 h-[38px] translate-x-0.5 translate-y-[3px]" viewBox="0 0 40 38"><use href="#outlook" width="36" height="32"/><path d="M17 21h23v17H17z" fill="#e9b06e"/><path d="M17 22l11.500 9.500L40 22" fill="none" stroke="#fff" stroke-width="1.500"/></svg><i></i></div>
      <div><svg class="w-[34px] h-[34px]" viewBox="0 0 34 34"><circle cx="17" cy="17" r="16.800" fill="#1ed760"/><g fill="none" stroke="#191414" stroke-linecap="round"><path d="M6.500 11c7-2 15.500-1.300 21.500 2" stroke-width="3.400"/><path d="M7.500 17.300c6-1.600 13-1 18.500 2" stroke-width="2.800"/><path d="M8.500 22.800c5-1.300 11-.8 15.500 1.900" stroke-width="2.200"/></g></svg><i></i></div>
      <div><svg class="w-[38px] h-[38px] translate-x-[3px] translate-y-0.5" viewBox="0 0 38 38"><circle cx="10" cy="10" r="10" fill="#00aff0"/><circle cx="23" cy="23" r="9" fill="#00aff0"/><circle cx="16.500" cy="16.500" r="15.500" fill="#00aff0"/><circle cx="16.500" cy="16.500" r="13" fill="#fff"/><circle cx="10" cy="10" r="8" fill="#fff"/><path d="M22.500 11.500c-1-2.500-3.500-3.500-6-3.500-3 0-6 1.300-6 4.300 0 6 12 2.500 12 8 0 3-3 4.500-6 4.500s-6-1.200-6.500-4" fill="none" stroke="#00aff0" stroke-width="4"/><circle cx="29" cy="29" r="9" fill="#fff"/><circle cx="29" cy="29" r="7.500" fill="#6bb700"/><path d="M25.500 29l2.500 2.700 4.500-5" fill="none" stroke="#fff" stroke-width="1.800"/></svg><i></i></div>
      <div><svg class="w-[34px] h-[32px] -translate-y-0.5" viewBox="0 0 34 32"><path d="M1.200 1.200h31.600v29.600H1.200z" fill="#2a0400" stroke="#f01a0c" stroke-width="2.400"/><path d="M8 25c2 1.500 7-6 8.500-12 .8-3 .8-5.500-.3-5.500-1.400 0-1.200 3 .3 6 2 4 6 8 9 8 2 0 1.500-2-1.500-2.200-5-.3-14 2.200-16 5.700z" fill="none" stroke="#f4eceb" stroke-width="1.500"/></svg><i></i></div>
      <div><svg class="w-9 h-8" viewBox="0 0 36 32"><rect x="8" width="27" height="32" rx="1.500" fill="#103f91"/><path d="M8 0h27v8H8z" fill="#41a5ee"/><path d="M8 8h27v8H8z" fill="#2b7cd3"/><path d="M8 16h27v8H8z" fill="#185abd"/><rect y="7" width="18" height="18" rx="1.500" fill="#185abd"/><text x="9" y="21" text-anchor="middle" font-size="13.500" font-weight="700" fill="#fff">W</text></svg><i></i></div>
      <div><svg class="w-9 h-8" viewBox="0 0 36 32"><circle cx="19.500" cy="16" r="16" fill="#d35230"/><path d="M3.500 16a16 16 0 0 1 16-16v16z" fill="#ed6c47"/><path d="M19.500 0a16 16 0 0 1 16 16h-16z" fill="#ff8f6b"/><rect y="7" width="18" height="18" rx="1.500" fill="#c43e1c"/><text x="9" y="21" text-anchor="middle" font-size="14" font-weight="700" fill="#fff">P</text></svg><i></i></div>
      <div><svg class="w-9 h-8" viewBox="0 0 36 32"><rect x="8" width="27" height="32" rx="1.500" fill="#185c37"/><path d="M8 0h14v8H8zM8 8h14v8H8z" fill="#21a366"/><path d="M22 0h13v8H22z" fill="#33c481"/><path d="M22 8h13v8H22z" fill="#21a366"/><path d="M8 16h27v8H8z" fill="#107c41"/><rect y="7" width="18" height="18" rx="1.500" fill="#107c41"/><text x="9" y="21" text-anchor="middle" font-size="14" font-weight="700" fill="#fff">X</text></svg><i></i></div>
    </div>
    <svg class="w-[248px] h-[60px] shrink-0" viewBox="1434 1020 248 60" fill="none" stroke="#fff" stroke-width="1.600">
      <path d="M1453.500 1054l8.500-8.500 8.500 8.500"/>
      <g stroke-width="1.300"><path d="M1502.500 1060c0-10 8-17.500 17-17.500M1506.500 1060c0-8 6-13.500 13-13.500M1510.500 1060c0-5.500 4-9.500 9-9.500M1514 1060c0-3 2-5.500 5.500-5.500"/></g><circle cx="1518.500" cy="1058.500" r="1.600" fill="#fff" stroke="none"/>
      <path d="M1551 1056a6 6 0 0 1 1-9 8 8 0 0 1 13-1l-4 8z" fill="#aaa" stroke="none"/><path d="M1550 1058a5 5 0 0 1 1-9c3-1.500 5 0 7 1.500l5-1.500c4 0 7 2.500 7 5.500 0 2-1.500 3.500-3.500 3.500z" fill="#fff" stroke="none"/>
      <path d="M1600 1040l6 4-6 4-6-4zM1612 1040l6 4-6 4-6-4zM1600 1048l6 4-6 4-6-4zM1612 1048l6 4-6 4-6-4zM1606 1053.500l5.500 3.500-5.500 3.500-5.500-3.500z" fill="#fff" stroke="none"/>
      <path d="M1643.500 1045h21v11.500h-21zM1666 1048.500v4.500"/><path d="M1645.500 1046.500h6v8.500h-6z" fill="#fff" stroke="none"/>
    </svg>
    <div class="flex grow items-center bg-[#251502]">
      <svg class="w-6 h-5 ml-2 shrink-0" viewBox="0 0 24 20" fill="none" stroke="#fff" stroke-width="1.300"><path d="M1 6.500h3.500L9 1.500v17L4.500 13.500H1zM12.500 7.500a4 4 0 0 1 0 5M15.500 5a8 8 0 0 1 0 10"/><path d="M18.500 2.500a12 12 0 0 1 0 15" stroke="#8a8177"/></svg>
      <div class="w-[139px] text-center text-[17px] leading-7 tracking-[-0.2px]"><p>21:06</p><p>15/07/2019</p></div>
      <svg class="w-[25px] h-6 ml-[5px]" viewBox="0 0 25 24" fill="none" stroke="#fff" stroke-width="1.400"><path d="M1 1h23v18h-8l-4 4-4-4H1z"/></svg>
      <div class="w-px h-[60px] ml-auto mr-[7px] bg-[#8a8177]"></div>
    </div>
  </div>
</div>

<!-- download dialog -->
<div class="absolute left-[297px] top-[248px] w-[650px] h-[472px] bg-[#f0f0f0] border border-[#1883d7] shadow-[0_4px_16px_rgba(0,0,0,.4)] text-[17px] leading-6 text-black whitespace-nowrap tracking-[0.04px]">
  <div class="flex items-center justify-between h-11 bg-white pl-[11px] pr-4"><span class="tracking-[0.12px]">Opening entity-matching-data.csv</span><svg class="size-4" viewBox="0 0 16 16"><path d="M.5.5l15 15M15.500.5l-15 15" stroke="#000" stroke-width="1.200"/></svg></div>
  <div class="px-[21px] pt-3.5">
    <p>You have chosen to open:</p>
    <div class="flex mt-[15px] pl-[15px] gap-2.5 font-bold">
      <svg class="w-5 h-[22px]" viewBox="0 0 20 22"><path d="M4 .5h11l4.500 4.500v16.500H4z" fill="#fff" stroke="#777"/><path d="M15 .5V5h4.500" fill="none" stroke="#777"/><rect y="4.500" width="12" height="12" fill="#107c41"/><text x="6" y="14.500" text-anchor="middle" font-size="10.500" fill="#fff">X</text><text x="12.500" y="14.500" font-size="10" fill="#33c481">a</text></svg>
      <span>entity-matching-data.csv</span>
    </div>
    <p class="flex gap-[7px] mt-[11px] pl-[45px]"><span>which is:</span><span>Microsoft Excel Comma Separated Values File (479 bytes)</span></p>
    <p class="flex gap-[7px] mt-1 pl-[45px]"><span>from:</span><span>data:</span></p>
    <p class="mt-10 font-bold">What should Firefox do with this file?</p>
    <div class="flex items-center mt-2.5 h-7 pl-[26px]">
      <svg class="size-5" viewBox="0 0 20 20"><circle cx="10" cy="10" r="9.300" fill="#fff" stroke="#333" stroke-width="1.200"/><circle cx="10" cy="10" r="5" fill="#222"/></svg>
      <span class="ml-0.5 w-[85px] h-7 border border-dotted border-black pl-px leading-6"><u class="underline-offset-2">O</u>pen with</span>
      <span class="flex items-center justify-between ml-3.5 w-[437px] h-7 bg-[#e1e1e1] border border-[#adadad] pl-[7px] pr-1.5">Microsoft Excel (default)<svg class="w-3 h-2" viewBox="0 0 12 8"><path d="M1 1l5 5 5-5" fill="none" stroke="#444" stroke-width="1.500"/></svg></span>
    </div>
    <div class="flex items-center mt-3 pl-[26px] gap-1"><svg class="size-5" viewBox="0 0 20 20"><circle cx="10" cy="10" r="9.300" fill="#fff" stroke="#333" stroke-width="1.200"/></svg><span><u class="underline-offset-2">S</u>ave File</span></div>
    <div class="flex items-center mt-[19px] pl-[26px] gap-1"><span class="size-5 bg-white border border-[#333]"></span><span>Do this <u class="underline-offset-2">a</u>utomatically for files like this from now on.</span></div>
    <div class="flex mt-[51px] pl-[364px] gap-4 h-[35px]">
      <span class="flex items-center justify-center w-[111px] bg-[#e1e1e1] border-2 border-[#0078d7]">OK</span>
      <span class="flex items-center justify-center w-[112px] ml-px bg-[#e1e1e1] border border-[#adadad]">Cancel</span>
    </div>
  </div>
</div>
</body>
</html>
